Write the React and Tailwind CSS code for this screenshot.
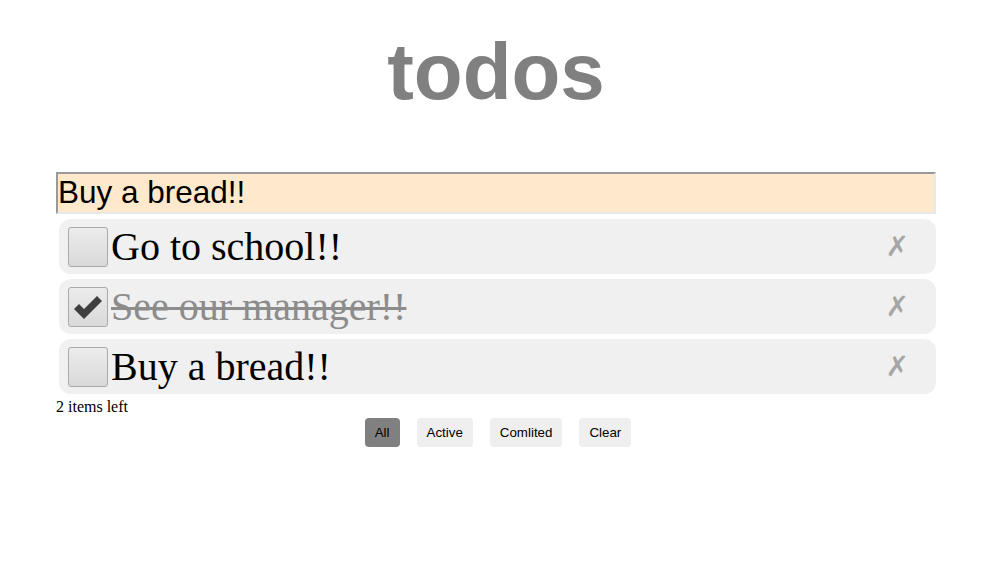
import React, { useState } from 'react';

const initialTodos = [
  { id: 1, text: 'Go to school!!', done: false },
  { id: 2, text: 'See our manager!!', done: true },
  { id: 3, text: 'Buy a bread!!', done: false },
];

const filters = ['All', 'Active', 'Comlited', 'Clear'];

const App = () => {
  const [todos, setTodos] = useState(initialTodos);
  const [draft, setDraft] = useState('Buy a bread!!');
  const [filter, setFilter] = useState('All');

  const toggle = (id) =>
    setTodos(todos.map((t) => (t.id === id ? { ...t, done: !t.done } : t)));
  const remove = (id) => setTodos(todos.filter((t) => t.id !== id));

  const left = todos.filter((t) => !t.done).length;

  return (
    <div className="min-h-screen bg-white w-[992px] pt-[26px]">
      <h1 className="text-center font-bold text-[80px] leading-[92px] text-[#808080] font-['Liberation_Sans',Arial,sans-serif]">
        todos
      </h1>
      <div className="mx-auto w-[880px] mt-[54px]">
        <input
          value={draft}
          onChange={(e) => setDraft(e.target.value)}
          className="block w-full h-[42px] px-0 bg-[#ffe9cc] text-black text-[31.5px] border-2 border-t-[#999] border-l-[#999] border-r-[#e8e8e8] border-b-[#e8e8e8] outline-none font-['Liberation_Sans',Arial,sans-serif]"
        />
        <ul className="flex flex-col gap-[5px] mt-[5px] pl-[3px]">
          {todos.map((t) => (
            <li
              key={t.id}
              className="flex items-center h-[55px] bg-[#f0f0f0] rounded-[12px] pl-[9px] pr-[27px]"
            >
              <button
                onClick={() => toggle(t.id)}
                className="flex items-center justify-center w-[40px] h-[40px] shrink-0 rounded-[3px] border border-[#a9a9a9] bg-gradient-to-b from-[#ececec] to-[#d9d9d9]"
              >
                {t.done && (
                  <svg width="32" height="26" viewBox="0 0 32 26" className="mt-[2px]">
                    <path d="M2 14 L7 9 L12 14 L25 1 L30 6 L12 24 Z" fill="#3f3f3f" />
                  </svg>
                )}
              </button>
              <span
                className={`ml-[3px] flex-1 text-[40px] leading-none font-['Liberation_Serif','Times_New_Roman',serif] ${
                  t.done ? 'text-[#8c8c8c] line-through decoration-[3px]' : 'text-black'
                }`}
              >
                {t.text}
              </span>
              <button
                onClick={() => remove(t.id)}
                className="text-[28px] leading-none text-[#a6a6a6] font-['DejaVu_Sans',sans-serif]"
              >
                ✗
              </button>
            </li>
          ))}
        </ul>
        <p className="text-[16px] leading-[20px] text-black font-['Liberation_Serif',serif] mt-[3px]">
          {left} items left
        </p>
        <div className="flex justify-center gap-[17px] mt-[1px] pl-[4px]">
          {filters.map((f) => (
            <button
              key={f}
              onClick={() => setFilter(f)}
              className={`h-[29px] px-[10px] rounded-[4px] text-[13.33px] text-black font-['Liberation_Sans',Arial,sans-serif] ${
                filter === f ? 'bg-[#808080]' : 'bg-[#efefef]'
              }`}
            >
              {f}
            </button>
          ))}
        </div>
      </div>
    </div>
  );
};

export default App;
